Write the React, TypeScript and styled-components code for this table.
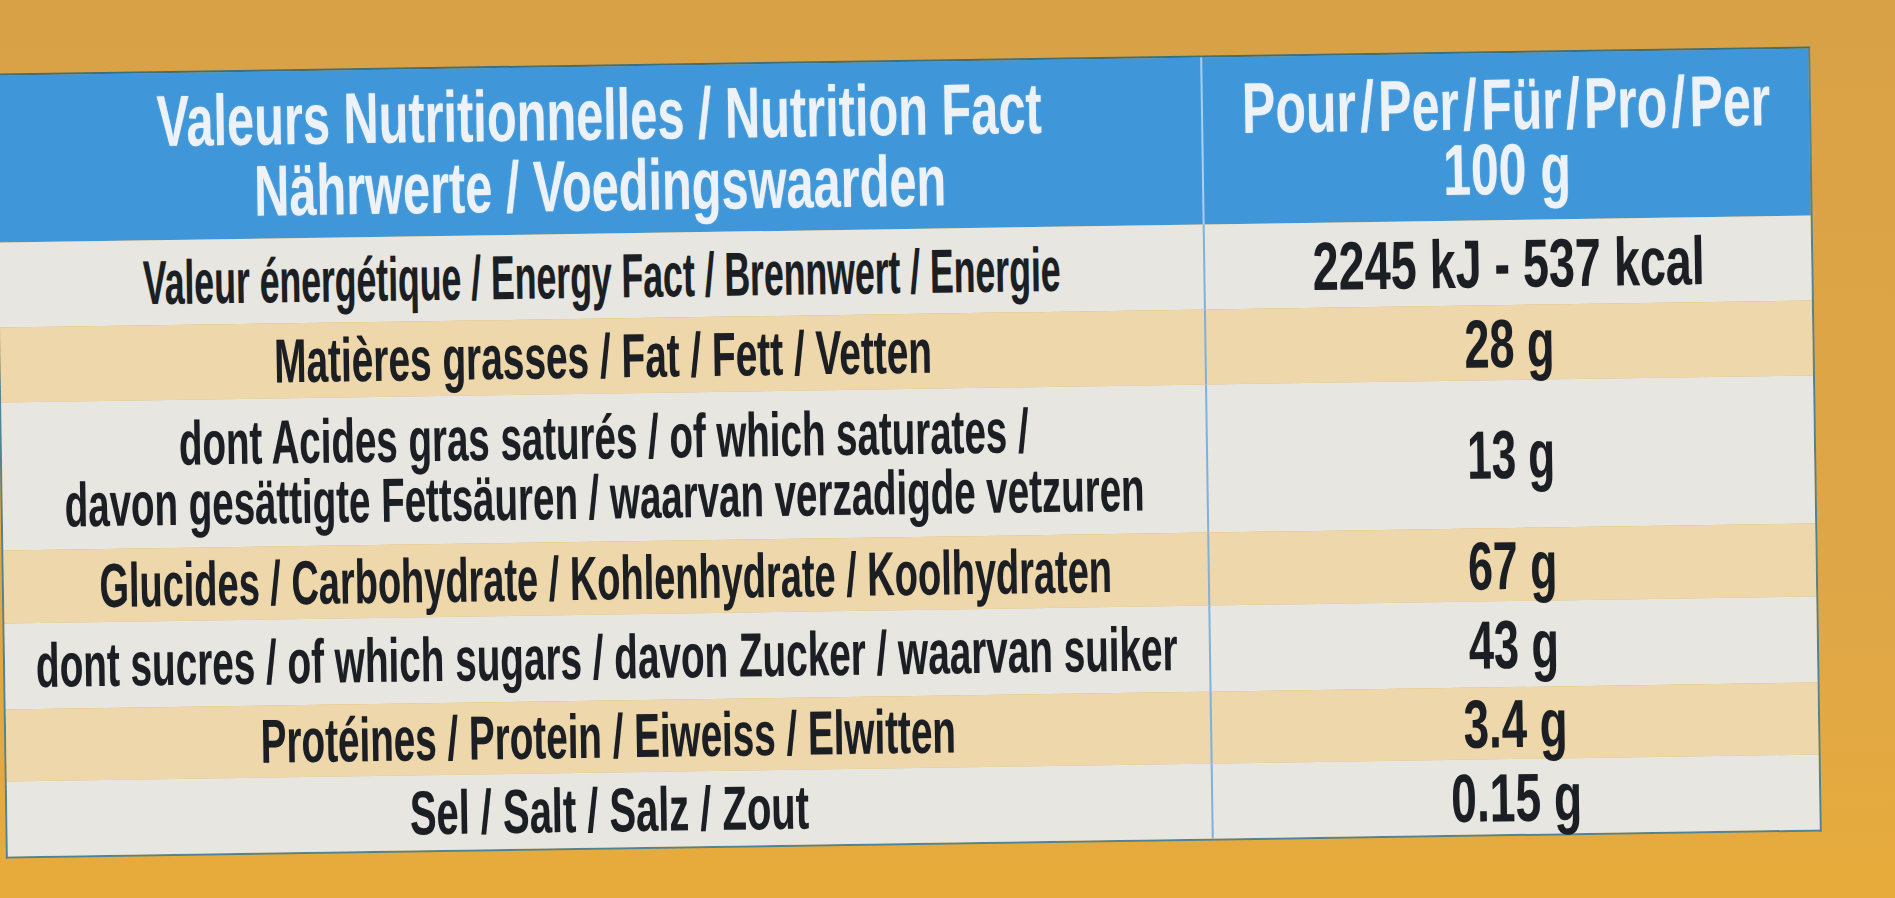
import React, { useLayoutEffect, useRef, useState } from 'react'
import styled, { createGlobalStyle } from 'styled-components'

const GlobalStyle = createGlobalStyle`
  html, body {
    margin: 0;
    padding: 0;
  }
  body {
    background: #dfa545;
    overflow: hidden;
  }
`

type Tone = 'head' | 'light' | 'beige'

const toneColor: Record<Tone, string> = {
  head: '#3f97d9',
  light: '#e7e6e1',
  beige: '#eed7aa',
}

const Page = styled.div`
  width: 1895px;
  height: 898px;
  box-sizing: border-box;
  padding-top: 60px;
  overflow: hidden;
  background: linear-gradient(180deg, #d9a146 0%, #dda446 30%, #e0a747 70%, #e7ab3b 100%);
  font-family: "Liberation Sans", Arial, sans-serif;
`

const Table = styled.div`
  width: 1816px;
  box-sizing: border-box;
  display: flex;
  flex-direction: column;
  border: 2px solid #4f8494;
  border-top-color: #3c6f78;
  transform: rotate(-0.85deg);
  transform-origin: 50% 50%;
`

const Row = styled.div<{ $tone: Tone; $h: number }>`
  display: grid;
  grid-template-columns: 1204px 1fr;
  height: ${(p) => p.$h}px;
  background: ${(p) => toneColor[p.$tone]};
`

const LabelCell = styled.div`
  min-width: 0;
  display: flex;
  align-items: center;
  justify-content: center;
`

const ValueCell = styled(LabelCell)<{ $head?: boolean }>`
  border-left: 2px solid ${(p) => (p.$head ? '#a8cff0' : '#7eb1de')};
`

const Text = styled.span<{ $size: number; $lh: number; $light?: boolean }>`
  display: inline-block;
  flex-shrink: 0;
  white-space: nowrap;
  text-align: center;
  font-weight: 700;
  font-size: ${(p) => p.$size}px;
  line-height: ${(p) => p.$lh}px;
  color: ${(p) => (p.$light ? '#ecf2f8' : '#1b1e23')};
  text-shadow: ${(p) =>
    p.$light ? '0 0 2px rgba(255, 255, 255, 0.3)' : '0 0 1px rgba(0, 0, 0, 0.25)'};
  transform-origin: 50% 50%;
`

type FitProps = {
  lines: string[]
  width: number
  size: number
  lh: number
  light?: boolean
}

// the print is condensed: squeeze the block so its widest line spans the measured width
const FitText = ({ lines, width, size, lh, light }: FitProps) => {
  const ref = useRef<HTMLSpanElement>(null)
  const [scale, setScale] = useState(1)

  useLayoutEffect(() => {
    const measure = () => {
      const el = ref.current
      if (el && el.offsetWidth) setScale(width / el.offsetWidth)
    }
    measure()
    if (document.fonts) document.fonts.ready.then(measure)
  }, [width, lines])

  return (
    <Text ref={ref} $size={size} $lh={lh} $light={light} style={{ transform: `scaleX(${scale})` }}>
      {lines.map((line, i) => (
        <React.Fragment key={line}>
          {i > 0 && <br />}
          {line}
        </React.Fragment>
      ))}
    </Text>
  )
}

type Nutrient = {
  tone: Tone
  h: number
  label: string[]
  labelWidth: number
  value: string
  valueWidth: number
}

const nutrients: Nutrient[] = [
  {
    tone: 'light',
    h: 85,
    label: ['Valeur énergétique / Energy Fact / Brennwert / Energie'],
    labelWidth: 918,
    value: '2245 kJ - 537 kcal',
    valueWidth: 392,
  },
  { tone: 'beige', h: 75, label: ['Matières grasses / Fat / Fett / Vetten'], labelWidth: 658, value: '28 g', valueWidth: 90 },
  {
    tone: 'light',
    h: 148,
    label: ['dont Acides gras saturés / of which saturates /', 'davon gesättigte Fettsäuren / waarvan verzadigde vetzuren'],
    labelWidth: 1080,
    value: '13 g',
    valueWidth: 88,
  },
  {
    tone: 'beige',
    h: 73,
    label: ['Glucides / Carbohydrate / Kohlenhydrate / Koolhydraten'],
    labelWidth: 1013,
    value: '67 g',
    valueWidth: 89,
  },
  {
    tone: 'light',
    h: 86,
    label: ['dont sucres / of which sugars / davon Zucker / waarvan suiker'],
    labelWidth: 1142,
    value: '43 g',
    valueWidth: 90,
  },
  { tone: 'beige', h: 72, label: ['Protéines / Protein / Eiweiss / Elwitten'], labelWidth: 695, value: '3.4 g', valueWidth: 104 },
  { tone: 'light', h: 75, label: ['Sel / Salt / Salz / Zout'], labelWidth: 399, value: '0.15 g', valueWidth: 131 },
]

const headTitle = ['Valeurs Nutritionnelles / Nutrition Fact', 'Nährwerte / Voedingswaarden']
const headPer = ['Pour\u200a/\u200aPer\u200a/\u200aFür\u200a/\u200aPro\u200a/\u200aPer', '100 g']

const App = () => {
  return (
    <Page>
      <GlobalStyle />
      <Table>
        <Row $tone="head" $h={167}>
          <LabelCell>
            <FitText lines={headTitle} width={885} size={72} lh={71} light />
          </LabelCell>
          <ValueCell $head>
            <FitText lines={headPer} width={528} size={72} lh={65} light />
          </ValueCell>
        </Row>

        {nutrients.map((n) => (
          <Row key={n.label[0]} $tone={n.tone} $h={n.h}>
            <LabelCell>
              <FitText lines={n.label} width={n.labelWidth} size={62} lh={60} />
            </LabelCell>
            <ValueCell>
              <FitText lines={[n.value]} width={n.valueWidth} size={68} lh={68} />
            </ValueCell>
          </Row>
        ))}
      </Table>
    </Page>
  )
}

export default App
